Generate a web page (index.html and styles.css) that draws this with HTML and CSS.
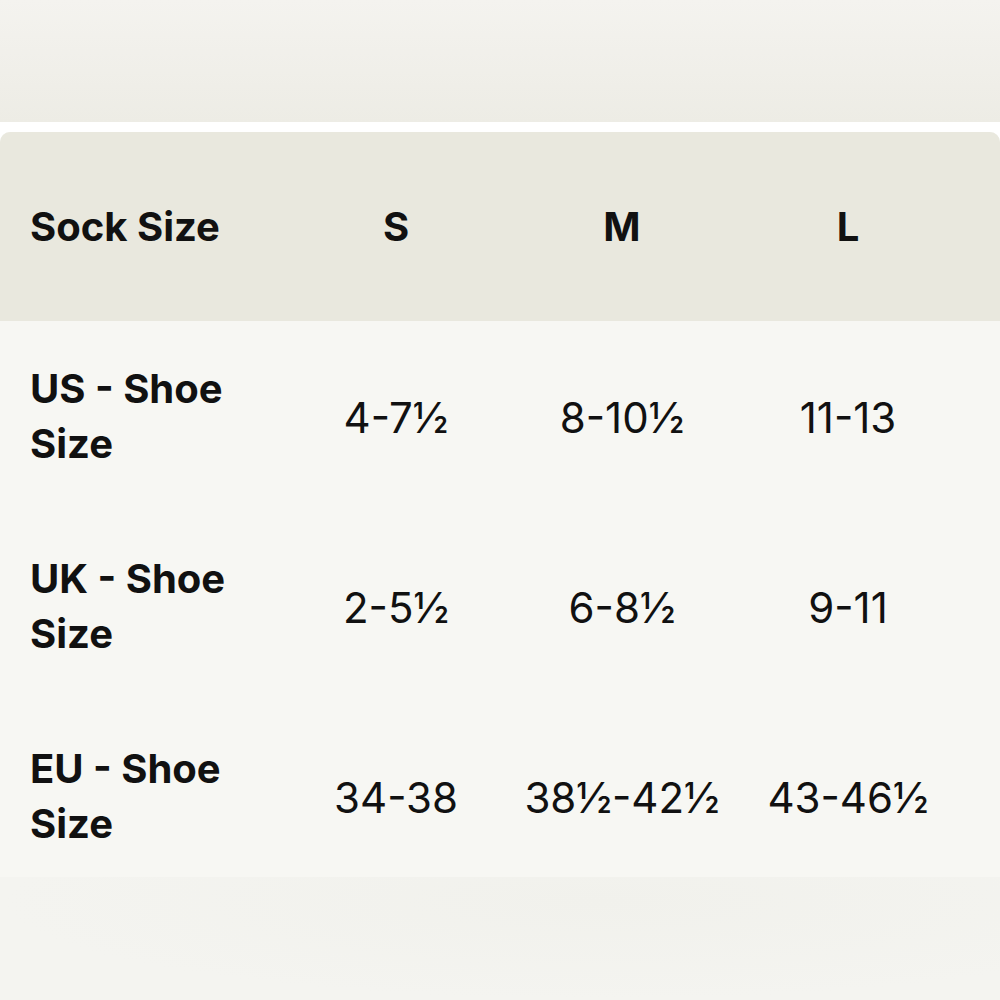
FILE: index.html
```html
<!DOCTYPE html>
<html lang="en">
  <head>
    <meta charset="UTF-8" />
    <meta name="viewport" content="width=device-width, initial-scale=1.0" />
    <title>Size Guide</title>
    <link rel="stylesheet" href="styles.css">
  </head>
  <body>
    <div class="hero"></div>

    <div class="chart">
      <div class="chart-scroll">
        <table class="size-table">
          <colgroup>
            <col class="col-label" />
            <col class="col-size" />
            <col class="col-size" />
            <col class="col-size" />
            <col class="col-size" />
          </colgroup>
          <thead>
            <tr>
              <th>Sock Size</th>
              <th>S</th>
              <th>M</th>
              <th>L</th>
              <th>XL</th>
            </tr>
          </thead>
          <tbody>
            <tr>
              <th>US - Shoe Size</th>
              <td>4-7½</td>
              <td>8-10½</td>
              <td>11-13</td>
              <td>14-15½</td>
            </tr>
            <tr>
              <th>UK - Shoe Size</th>
              <td>2-5½</td>
              <td>6-8½</td>
              <td>9-11</td>
              <td>12-14½</td>
            </tr>
            <tr>
              <th>EU - Shoe Size</th>
              <td>34-38</td>
              <td>38½-42½</td>
              <td>43-46½</td>
              <td>47-49</td>
            </tr>
          </tbody>
        </table>
      </div>
    </div>

    <div class="footer"></div>
  </body>
</html>
```

FILE: styles.css
```css
html,
body {
  margin: 0;
  padding: 0;
}

body {
  font-family: "Inter", "Liberation Sans", sans-serif;
  background-color: #f3f3ef;
  color: #111;
  overflow: hidden;
  height: 1000px;
}

.hero {
  height: 122px;
  background: linear-gradient(to bottom, #f4f3ef, #edece5);
}

.chart {
  background-color: #fff;
  padding-top: 10px;
}

.chart-scroll {
  width: 1000px;
  height: 745px;
  overflow: hidden;
  border-radius: 10px 10px 0 0;
  background-color: #f7f7f3;
}

.size-table {
  border-collapse: collapse;
  table-layout: fixed;
  width: 1187px;
  background-color: #f7f7f3;
}

.col-label {
  width: 283px;
}

.col-size {
  width: 226px;
}

.size-table thead tr {
  background-color: #e9e8de;
  height: 189px;
}

.size-table tbody tr {
  height: 190px;
}

.size-table th,
.size-table td {
  padding: 0;
  font-size: 40px;
  line-height: 55px;
  text-align: center;
  vertical-align: middle;
}

.size-table th {
  font-weight: 700;
}

.size-table td {
  font-weight: 400;
  font-size: 42px;
  padding-top: 3px;
}

.size-table th:first-child {
  text-align: left;
  padding-left: 30px;
  padding-right: 40px;
}

.footer {
  height: 123px;
  background: radial-gradient(ellipse at 60% 20%, #f1f1ec, #f4f4f0 70%);
}
```
